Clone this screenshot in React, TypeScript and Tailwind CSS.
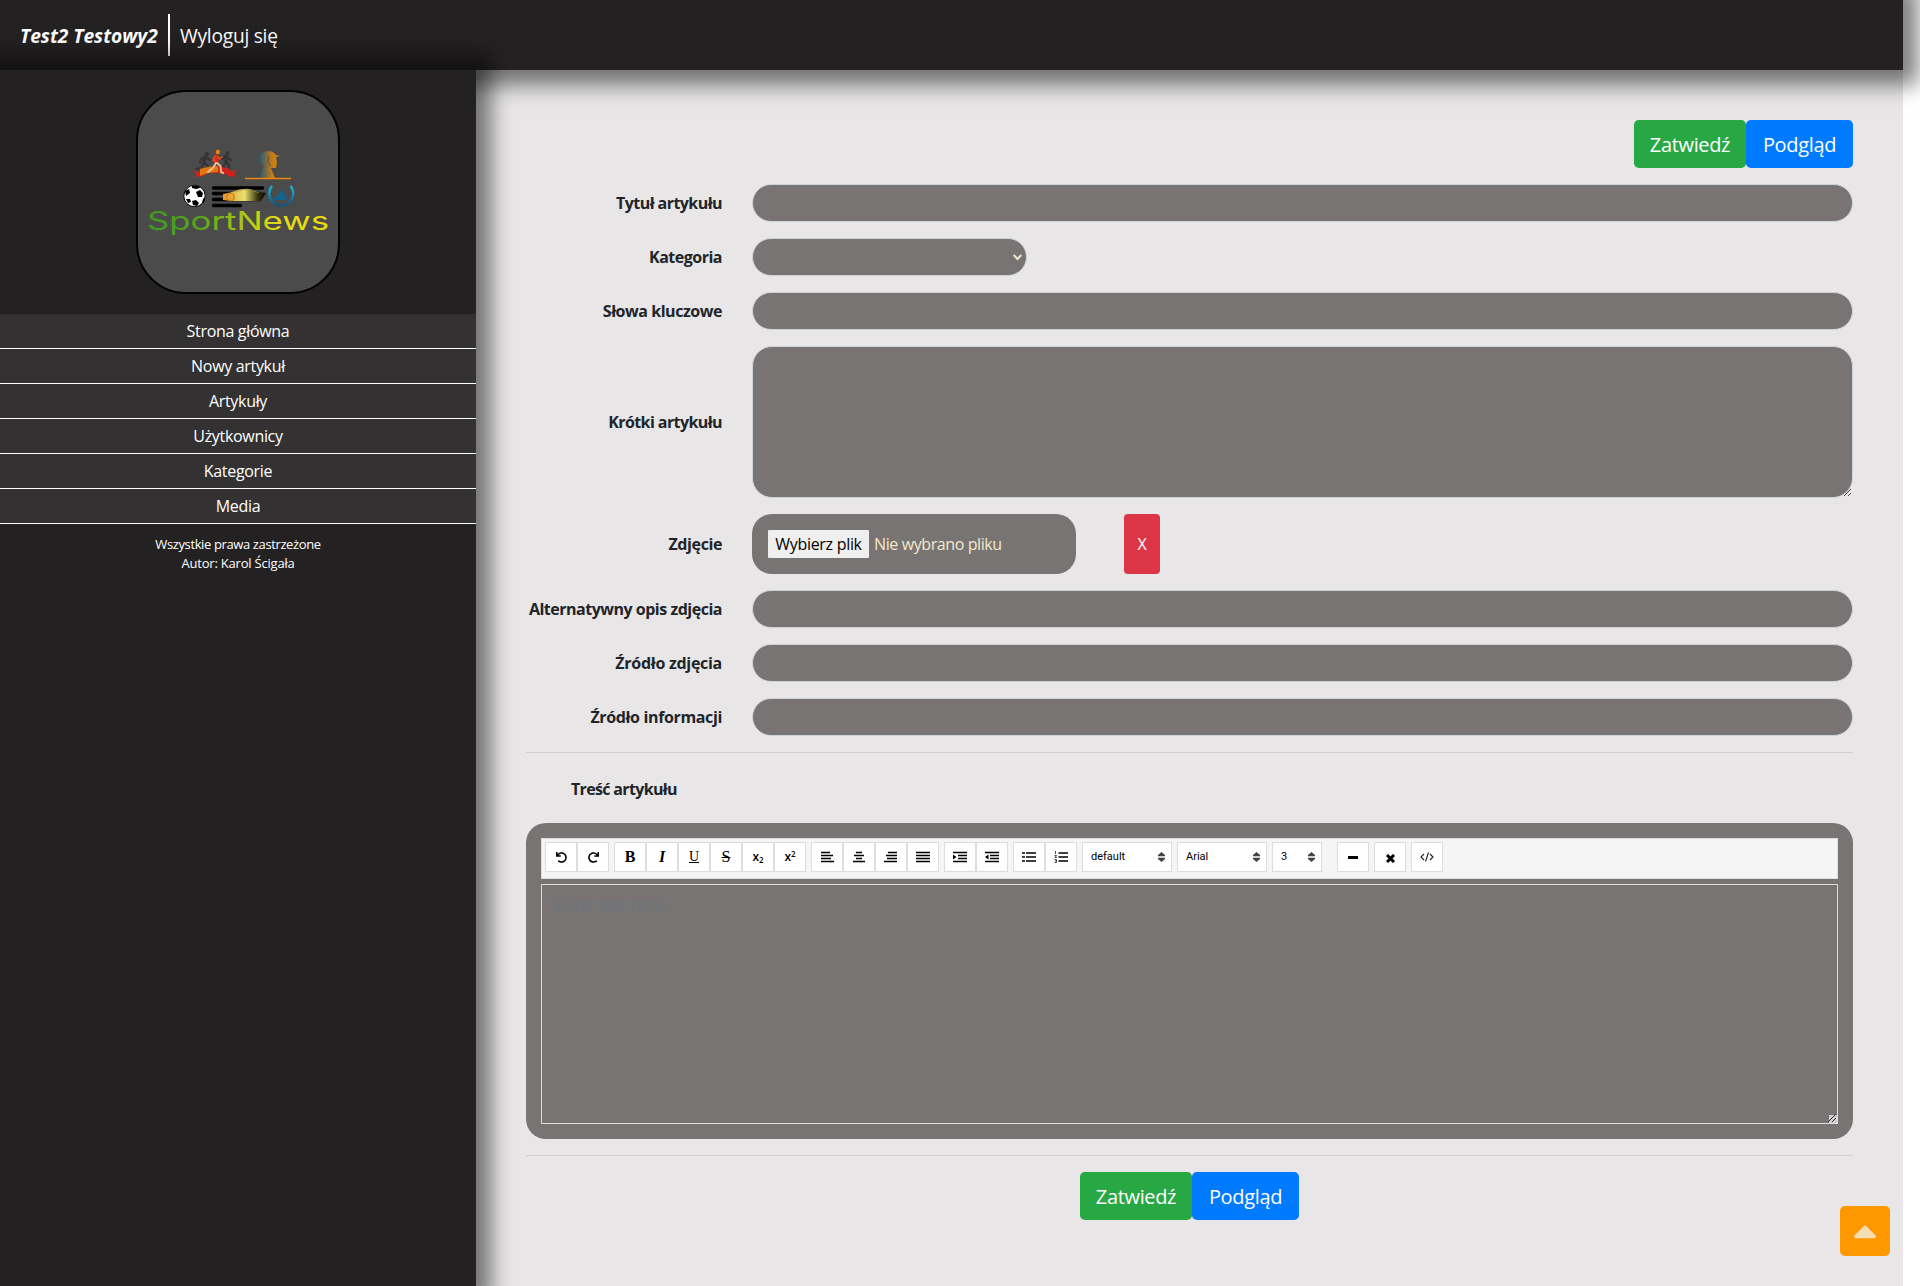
import React from "react";
import { FaUndo, FaRedo, FaCaretUp } from "react-icons/fa";

function Logo() {
  return (
    <svg width="200" height="200" viewBox="0 0 200 200">
      <defs>
        <linearGradient id="word" x1="10" x2="190" y1="0" y2="0" gradientUnits="userSpaceOnUse">
          <stop offset="0" stopColor="#3c9a1c" />
          <stop offset="0.3" stopColor="#5aa51a" />
          <stop offset="0.6" stopColor="#c5d010" />
          <stop offset="0.75" stopColor="#e8dc12" />
          <stop offset="1" stopColor="#e8d80c" />
        </linearGradient>
        <linearGradient id="head" x1="0" x2="1" y1="0" y2="0">
          <stop offset="0" stopColor="#1d5878" />
          <stop offset="0.6" stopColor="#c07a18" />
          <stop offset="1" stopColor="#e08808" />
        </linearGradient>
        <linearGradient id="car" x1="0" x2="1" y1="0" y2="0">
          <stop offset="0" stopColor="#e8952a" />
          <stop offset="0.5" stopColor="#e8e070" />
          <stop offset="0.8" stopColor="#3a3810" />
          <stop offset="1" stopColor="#000" />
        </linearGradient>
        <linearGradient id="ring" x1="0" x2="0" y1="0" y2="1">
          <stop offset="0" stopColor="#25b4d8" />
          <stop offset="1" stopColor="#14507c" />
        </linearGradient>
      </defs>
      <g fill="none" stroke="#343436" strokeWidth="2.2" strokeLinecap="round" strokeLinejoin="round">
        <path d="M68 65l-2 6 4 3 1 4M66 71l-3 5-5 1M67 65l-4 2-1 4M69 66l3 2" />
        <path d="M89 64l-1 6 3 3 0 5M88 70l-3 5-3 1M88 64l-4 3M90 66l3 2" />
        <path d="M67.500 65l-1.500 5M88.500 64l-0.500 5" strokeWidth="3.500" />
      </g>
      <circle cx="69" cy="62" r="2" fill="#343436" />
      <circle cx="89.500" cy="61" r="2" fill="#343436" />
      <path d="M54 79l8 1v-3q18-5 30 0v2l7-1-3 3 2 4-8-1-2-2q-14-2-21 0l-1 2-9 1 2-3z" fill="#d3201c" />
      <path d="M62 77q9-3 18-3v6q-10 0-18 4z" fill="#e07a10" />
      <circle cx="79.800" cy="60" r="2.200" fill="#f08010" />
      <g fill="none" strokeLinecap="round" strokeLinejoin="round">
        <path d="M78.500 65l-0.500 5" stroke="#dc2a14" strokeWidth="4.500" />
        <path d="M77 64l-2 4 2 1M80 65l2 2 2-2" stroke="#e8501a" strokeWidth="1.600" />
        <path d="M79 71l3.500 3 0.500 6 2 1" stroke="#f4bd84" strokeWidth="2" />
        <path d="M78 71l-3 5-5 4" stroke="#f0c0a0" strokeWidth="2" />
      </g>
      <path d="M122 63q5-6 13-3l3 3 4 1-4 1 1 6-1 5-5 0 4 10h-16l2-7 3-5-4-3z" fill="url(#head)" />
      <path d="M131 64l-1 6 3 4" fill="none" stroke="#634f32" />
      <path d="M107 86.500h46" stroke="#e8870a" strokeWidth="1.400" />
      <circle cx="56.500" cy="104" r="10.700" fill="#fff" stroke="#000" strokeWidth="1" />
      <g fill="#000">
        <path d="M58 100l4-2 3 3-1 4-4 0zM47 99l4-2 1 4-4 3zM54 94l7 0 1 2-4 1-4-1zM48 107l4 0 1 3-3 1zM54 109l4-1 3 3-2 3-4-1zM65 107l2-2-1 6-2 0z" />
      </g>
      <path d="M75.500 96h49M75.500 101.500h46M75.500 107.500h46M75.500 113.500h27" stroke="#000" strokeWidth="3.600" strokeLinecap="round" />
      <path d="M85 102l9-2q9-4 18-3l9 3 7 1-5 8-9 0-20 0-9-1z" fill="url(#car)" />
      <path d="M97 100q8-4 16-2l8 3" fill="none" stroke="#9a9038" strokeWidth="0.700" />
      <circle cx="92.500" cy="105" r="4" fill="#eba42e" stroke="#8a6420" strokeWidth="0.600" />
      <path d="M134 94a12 12 0 1 0 18.500 0" fill="none" stroke="url(#ring)" strokeWidth="2.400" />
      <path d="M136 106l4-3 1-1 2-6 2 5 0 3 4-2-1 3 2 1-3 2-11 0z" fill="#14628f" />
      <text x="9" y="137.500" textLength="182" lengthAdjust="spacingAndGlyphs" fontFamily="Inter" fontSize="25.500" fontWeight="400" fill="url(#word)">SportNews</text>
    </svg>
  );
}

const nav = ["Strona główna", "Nowy artykuł", "Artykuły", "Użytkownicy", "Kategorie", "Media"];

const field = "block w-full rounded-[20px] border border-[#ced4da] bg-[#787473]";

function Row({ label, spacing, children }: { label: string; spacing: string; children: React.ReactNode }) {
  return (
    <div className="mb-4 flex items-center">
      <label className={`flex w-[226px] shrink-0 justify-end pr-[30px] text-base leading-6 font-bold whitespace-nowrap ${spacing}`}>{label}</label>
      <div className="min-w-0 flex-1">{children}</div>
    </div>
  );
}

function Buttons() {
  return (
    <>
      <button className="h-12 w-28 rounded-[4.8px] bg-[#28a745] pt-0.5 text-xl tracking-[-0.35px] text-white">Zatwiedź</button>
      <button className="h-12 w-[107px] rounded-[4.8px] bg-[#007bff] pt-0.5 text-xl tracking-[-0.35px] text-white">Podgląd</button>
    </>
  );
}

function Tools({ children }: { children: React.ReactNode }) {
  return <div className="mr-[5px] flex">{children}</div>;
}

function Tool({ children }: { children: React.ReactNode }) {
  return (
    <button className="flex h-[30px] w-8 items-center justify-center border border-[#ddd] bg-white font-['Liberation_Serif',serif] text-[16px] leading-none text-black">
      {children}
    </button>
  );
}

function Lines({ d, children }: { d: string; children?: React.ReactNode }) {
  return (
    <svg width="14" height="12" viewBox="0 0 14 12" fill="none" stroke="#000" strokeWidth="1.7">
      <path d={d} />
      {children}
    </svg>
  );
}

function Picker({ text, width }: { text: string; width: string }) {
  return (
    <div className={`mr-[5px] flex h-[30px] items-center justify-between border border-[#ddd] bg-white pr-[6px] pl-2 font-['Roboto'] text-[11px] text-black ${width}`}>
      {text}
      <svg width="7" height="10" viewBox="0 0 7 10" fill="#444">
        <path d="M3.500 0L7 3v1.300H0V3zM3.500 10L7 7V5.700H0V7z" />
      </svg>
    </div>
  );
}

export default function App() {
  return (
    <div className="h-[1286px] overflow-hidden bg-white font-['Open_Sans','Noto_Sans',sans-serif] text-[#212529]">
      <header className="relative z-10 flex h-[70px] w-[1903px] items-center bg-[#242122] text-white shadow-[0_0_20px_15px_rgba(0,0,0,0.5)]">
        <span className="mt-0.5 ml-5 w-[139px] text-[19.2px] font-bold tracking-[-0.02px] whitespace-nowrap italic">Test2 Testowy2</span>
        <span className="ml-[9px] h-[42px] w-[2px] bg-white" />
        <span className="mt-0.5 ml-2.5 text-[19.2px] tracking-[-0.25px]">Wyloguj się</span>
      </header>
      <div className="flex h-[1216px] w-[1903px] bg-[#e8e6e7]">
        <aside className="relative z-20 w-[476px] shrink-0 bg-[#242122] pt-5 text-center text-white shadow-[0_0_20px_15px_rgba(0,0,0,0.5)]">
          <div className="mx-auto h-[204px] w-[204px] overflow-hidden rounded-[50px] border-2 border-black bg-[#4b4b4b]">
            <Logo />
          </div>
          <nav className="mt-5">
            {nav.map((t) => (
              <a key={t} className="block h-[35px] border-b border-white bg-[#333132] pt-[5px] text-base leading-6 tracking-[-0.32px]">{t}</a>
            ))}
          </nav>
          <p className="mt-[11px] text-[13px] leading-[19px] tracking-[-0.38px]">
            Wszystkie prawa zastrzeżone
            <br />
            <span className="tracking-[-0.2px]">Autor: Karol Ścigała</span>
          </p>
        </aside>
        <main className="flex-1 px-[50px] pt-[50px]">
          <div className="mb-4 flex justify-end">
            <Buttons />
          </div>
          <Row label="Tytuł artykułu" spacing="tracking-[-0.55px]"><div className={`${field} h-[38px]`} /></Row>
          <Row label="Kategoria" spacing="tracking-[-0.5px]">
            <div className="flex h-[38px] w-[275px] items-center justify-end rounded-[20px] border border-[#ced4da] bg-[#787473] pr-[4px]">
              <svg width="9" height="7" viewBox="0 0 9 7" fill="none" stroke="#f0e8d0" strokeWidth="2"><path d="M0.700 1l3.800 4 3.800-4" /></svg>
            </div>
          </Row>
          <Row label="Słowa kluczowe" spacing="tracking-[-0.45px]"><div className={`${field} h-[38px]`} /></Row>
          <Row label="Krótki artykułu" spacing="tracking-[-0.58px]">
            <div className={`${field} flex h-[152px] items-end justify-end`}>
              <svg width="9" height="9" viewBox="0 0 9 9" stroke="#444"><path d="M1 8l7-7M5 8l3-3" /></svg>
            </div>
          </Row>
          <Row label="Zdjęcie" spacing="tracking-[-0.4px]">
            <div className="flex">
              <div className="flex h-[60px] w-[324px] items-center rounded-[20px] bg-[#787473] pl-4 text-base">
                <button className="h-7 w-[101px] rounded-[1px] bg-[#efefef] tracking-[-0.3px] whitespace-nowrap text-black">Wybierz plik</button>
                <span className="ml-[5px] tracking-[-0.4px] text-[#f5e8cc]">Nie wybrano pliku</span>
              </div>
              <button className="ml-12 h-[60px] w-9 rounded bg-[#dc3545] text-white">X</button>
            </div>
          </Row>
          <Row label="Alternatywny opis zdjęcia" spacing="tracking-[-0.49px]"><div className={`${field} h-[38px]`} /></Row>
          <Row label="Źródło zdjęcia" spacing="tracking-[-0.28px]"><div className={`${field} h-[38px]`} /></Row>
          <Row label="Źródło informacji" spacing="tracking-[-0.36px]"><div className={`${field} h-[38px]`} /></Row>
          <hr className="border-t border-[#cfcdce]" />
          <h2 className="mt-6 ml-[45px] text-base leading-6 font-bold tracking-[-0.66px]">Treść artykułu</h2>
          <section className="mt-[22px] h-[316px] rounded-[20px] bg-[#787473] p-[15px]">
            <div className="flex h-[41px] border border-[#ddd] bg-[#f5f5f5] pt-[3px] pl-[3px]">
              <Tools>
                <Tool><FaUndo size={11} /></Tool>
                <Tool><FaRedo size={11} /></Tool>
              </Tools>
              <Tools>
                <Tool><b>B</b></Tool>
                <Tool><b className="italic">I</b></Tool>
                <Tool><span className="border-b border-black text-[14px] leading-[11px]">U</span></Tool>
                <Tool><span className="line-through">S</span></Tool>
                <Tool><span className="font-['Open_Sans'] text-[12px] font-semibold">x<sub className="text-[8px]">2</sub></span></Tool>
                <Tool><span className="font-['Open_Sans'] text-[12px] font-semibold">x<sup className="text-[8px]">2</sup></span></Tool>
              </Tools>
              <Tools>
                <Tool><Lines d="M1 1.500h9M1 4.500h12M1 7.500h10M1 10.500h13" /></Tool>
                <Tool><Lines d="M4 1.500h6M2 4.500h10M4 7.500h6M1 10.500h12" /></Tool>
                <Tool><Lines d="M4 1.500h9M2 4.500h11M3 7.500h10M0 10.500h13" /></Tool>
                <Tool><Lines d="M0 1.500h14M0 4.500h14M0 7.500h14M0 10.500h14" /></Tool>
              </Tools>
              <Tools>
                <Tool><Lines d="M0 1.500h14M5 4.500h9M5 7.500h9M0 10.500h14"><path d="M0 3.500L3.500 6 0 8.500z" fill="#000" stroke="none" /></Lines></Tool>
                <Tool><Lines d="M0 1.500h14M5 4.500h9M5 7.500h9M0 10.500h14"><path d="M3.500 3.500L0 6l3.500 2.500z" fill="#000" stroke="none" /></Lines></Tool>
              </Tools>
              <Tools>
                <Tool><Lines d="M0 2h3M4 2h10M0 6h3M4 6h10M0 10h3M4 10h10" /></Tool>
                <Tool><Lines d="M4.500 2h9.500M4.500 6h9.500M4.500 10h9.500"><path d="M1.500 0v3M0.500 4.500h2l-1.500 2h2M0.500 8.500h2v3h-2M1 10h1.500" strokeWidth="0.7" /></Lines></Tool>
              </Tools>
              <Picker text="default" width="w-[90px]" />
              <Picker text="Arial" width="w-[90px]" />
              <Picker text="3" width="w-[50px]" />
              <div className="w-2.5" />
              <Tools><Tool><svg width="10" height="3" viewBox="0 0 10 3"><rect width="10" height="3" rx="0.500" /></svg></Tool></Tools>
              <Tools><Tool><svg className="mt-0.5" width="9" height="9" viewBox="0 0 9 9" stroke="#000" strokeWidth="3"><path d="M1 1l7 7M8 1L1 8" /></svg></Tool></Tools>
              <Tools><Tool><svg width="14" height="10" viewBox="0 0 14 10" fill="none" stroke="#222" strokeWidth="1.1"><path d="M4 2L1 5l3 3M10 2l3 3-3 3M8.500 0.500l-3 9" /></svg></Tool></Tools>
            </div>
            <div className="mt-[5px] flex h-60 justify-between border border-[#ddd]">
              <span className="mt-2 ml-[14px] text-base tracking-[-0.3px] text-[#6c757d]">Enter text here...</span>
              <svg className="self-end" width="9" height="9" viewBox="0 0 9 9"><path d="M1 1h8v8H1z" fill="#ccc" /><path d="M0 8l8-8M4 8l4-4" stroke="#333" /></svg>
            </div>
          </section>
          <hr className="mt-4 border-t border-[#cfcdce]" />
          <div className="mt-4 flex justify-center">
            <Buttons />
          </div>
        </main>
      </div>
      <button className="fixed right-[30px] bottom-[30px] flex h-[50px] w-[50px] items-center justify-center rounded-[5px] bg-[#ff9800] text-[#f5deb3]">
        <FaCaretUp size={38} />
      </button>
    </div>
  );
}
